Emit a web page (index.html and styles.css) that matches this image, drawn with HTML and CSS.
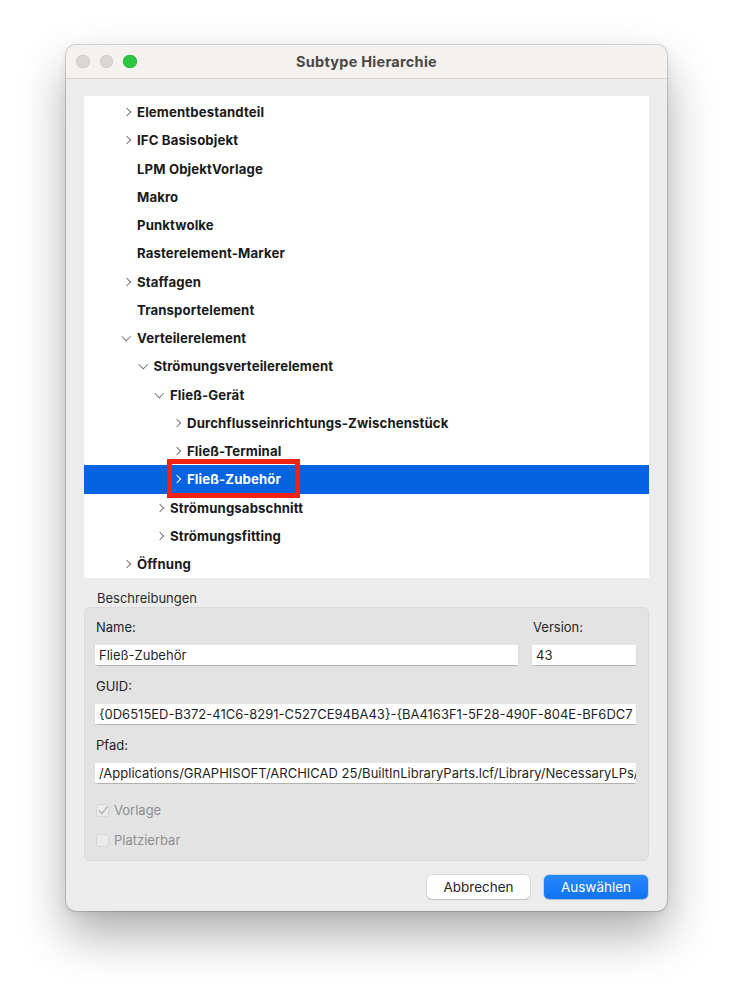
FILE: index.html
```html
<!DOCTYPE html>
<html lang="de">
<head>
    <meta charset="UTF-8">
    <title>Subtype Hierarchie</title>
    <link rel="stylesheet" href="styles.css">
</head>
<body>
    <div class="window">
        <div class="titlebar">
            <div class="lights">
                <span class="light"></span>
                <span class="light"></span>
                <span class="light green"></span>
            </div>
            <div class="title">Subtype Hierarchie</div>
            <div class="lights-spacer"></div>
        </div>

        <div class="dialog">
            <div class="tree">
                <div class="row lvl0"><span class="chev right"></span><span class="label">Elementbestandteil</span></div>
                <div class="row lvl0"><span class="chev right"></span><span class="label">IFC Basisobjekt</span></div>
                <div class="row lvl0"><span class="chev"></span><span class="label">LPM ObjektVorlage</span></div>
                <div class="row lvl0"><span class="chev"></span><span class="label">Makro</span></div>
                <div class="row lvl0"><span class="chev"></span><span class="label">Punktwolke</span></div>
                <div class="row lvl0"><span class="chev"></span><span class="label">Rasterelement-Marker</span></div>
                <div class="row lvl0"><span class="chev right"></span><span class="label">Staffagen</span></div>
                <div class="row lvl0"><span class="chev"></span><span class="label">Transportelement</span></div>
                <div class="row lvl0"><span class="chev down"></span><span class="label">Verteilerelement</span></div>
                <div class="row lvl1"><span class="chev down"></span><span class="label">Strömungsverteilerelement</span></div>
                <div class="row lvl2"><span class="chev down"></span><span class="label">Fließ-Gerät</span></div>
                <div class="row lvl3"><span class="chev right"></span><span class="label">Durchflusseinrichtungs-Zwischenstück</span></div>
                <div class="row lvl3"><span class="chev right"></span><span class="label">Fließ-Terminal</span></div>
                <div class="row lvl3 selected">
                    <span class="chev right"></span><span class="label">Fließ-Zubehör</span>
                    <span class="highlight-box"></span>
                </div>
                <div class="row lvl2"><span class="chev right"></span><span class="label">Strömungsabschnitt</span></div>
                <div class="row lvl2"><span class="chev right"></span><span class="label">Strömungsfitting</span></div>
                <div class="row lvl0"><span class="chev right"></span><span class="label">Öffnung</span></div>
            </div>

            <div class="group-title">Beschreibungen</div>
            <div class="group">
                <div class="field-row">
                    <div class="field field-name">
                        <div class="field-label">Name:</div>
                        <div class="input">Fließ-Zubehör</div>
                    </div>
                    <div class="field field-version">
                        <div class="field-label">Version:</div>
                        <div class="input">43</div>
                    </div>
                </div>
                <div class="field field-spaced">
                    <div class="field-label">GUID:</div>
                    <div class="input">{0D6515ED-B372-41C6-8291-C527CE94BA43}-{BA4163F1-5F28-490F-804E-BF6DC7</div>
                </div>
                <div class="field field-spaced">
                    <div class="field-label">Pfad:</div>
                    <div class="input">/Applications/GRAPHISOFT/ARCHICAD 25/BuiltInLibraryParts.lcf/Library/NecessaryLPs/</div>
                </div>
                <div class="check first">
                    <span class="box checked">
                        <svg width="10" height="9" viewBox="0 0 10 9"><polyline points="1,4.8 3.8,7.6 9,1.2" fill="none" stroke="#b9b9b9" stroke-width="1.6" stroke-linecap="round" stroke-linejoin="round"/></svg>
                    </span>
                    <span>Vorlage</span>
                </div>
                <div class="check">
                    <span class="box"></span>
                    <span>Platzierbar</span>
                </div>
            </div>

            <div class="buttons">
                <button class="btn">Abbrechen</button>
                <button class="btn primary">Auswählen</button>
            </div>
        </div>
    </div>
</body>
</html>
```

FILE: styles.css
```css
html, body {
    margin: 0;
    padding: 0;
    background-color: #ffffff;
}

body {
    font-family: 'Inter', 'Noto Sans', sans-serif;
    font-size: 13px;
    color: #1d1d1f;
    width: 733px;
    height: 999px;
    overflow: hidden;
}

.window {
    margin: 45px 0 0 66px;
    width: 601px;
    height: 866px;
    border-radius: 10px;
    overflow: hidden;
    background-color: #ececec;
    box-shadow: 0 0 0 1px rgba(0, 0, 0, 0.14), 0 24px 48px rgba(0, 0, 0, 0.32), 0 2px 8px rgba(0, 0, 0, 0.08);
}

/* title bar */
.titlebar {
    display: flex;
    align-items: center;
    height: 33px;
    background-color: #f4f1ee;
    border-bottom: 1px solid #d6d3d0;
}

.lights {
    display: flex;
    gap: 10px;
    width: 80px;
    padding-left: 10px;
    box-sizing: border-box;
    flex: none;
}

.lights-spacer {
    width: 80px;
    flex: none;
}

.light {
    width: 13.5px;
    height: 13.5px;
    flex: none;
    border-radius: 50%;
    background-color: #d9d6d3;
    box-shadow: inset 0 0 0 0.5px #c8c5c2;
}

.light.green {
    background-color: #2ac840;
    box-shadow: inset 0 0 0 0.5px #22ad36;
}

.title {
    flex: 1;
    text-align: center;
    font-weight: 700;
    font-size: 14.5px;
    letter-spacing: 0.25px;
    color: #4a4846;
}

/* dialog body */
.dialog {
    padding: 17px 18px 12px 18px;
}

.tree {
    height: 482px;
    background-color: #ffffff;
    padding-top: 2px;
    box-sizing: border-box;
}

.row {
    position: relative;
    display: flex;
    align-items: center;
    height: 28.25px;
    font-weight: 700;
    font-size: 13.2px;
    letter-spacing: 0.12px;
    color: #1a1a1a;
}

.lvl0 { padding-left: 38px; }
.lvl1 { padding-left: 54.5px; }
.lvl2 { padding-left: 71px; }
.lvl3 { padding-left: 88px; }

.chev {
    width: 15px;
    height: 10px;
    flex: none;
    position: relative;
}

.chev.right::before {
    content: "";
    position: absolute;
    left: 2px;
    top: 2px;
    width: 5px;
    height: 5px;
    border-right: 1.5px solid #767676;
    border-top: 1.5px solid #767676;
    transform: rotate(45deg);
}

.chev.down::before {
    content: "";
    position: absolute;
    left: 1px;
    top: 0px;
    width: 5.5px;
    height: 5.5px;
    border-right: 1.5px solid #767676;
    border-bottom: 1.5px solid #767676;
    transform: rotate(45deg);
}

.row.selected {
    background-color: #0463e1;
    color: #ffffff;
}

.row.selected .chev.right::before {
    border-color: #ffffff;
}

.highlight-box {
    position: absolute;
    left: 83px;
    top: -6px;
    width: 133px;
    height: 39px;
    border: 5px solid #f2220f;
    box-sizing: border-box;
}

/* description group */
.group-title {
    margin-top: 12px;
    padding-left: 13px;
    line-height: 16px;
    color: #2a2a2a;
}

.group {
    margin-top: 1px;
    height: 254px;
    box-sizing: border-box;
    background-color: #e3e3e3;
    border: 1px solid #dadada;
    border-radius: 6px;
    padding: 11px 12px 12px 10px;
}

.field-row {
    display: flex;
    gap: 14px;
}

.field-name {
    width: 423px;
}

.field-version {
    width: 104px;
}

.field-label {
    line-height: 16px;
    color: #262626;
    padding-left: 1px;
    margin-bottom: 10px;
}

.field-spaced {
    margin-top: 13px;
}

.input {
    height: 20px;
    line-height: 20px;
    background-color: #ffffff;
    padding-left: 4px;
    white-space: nowrap;
    overflow: hidden;
    color: #1f1f1f;
    box-shadow: 0 0.5px 1px rgba(0, 0, 0, 0.22);
}

.check {
    display: flex;
    align-items: center;
    gap: 5px;
    line-height: 16px;
    color: #8e8e8e;
    margin-top: 14px;
    padding-left: 1px;
}

.check.first {
    margin-top: 19px;
}

.box {
    width: 13px;
    height: 13px;
    border-radius: 3px;
    background-color: #ebebeb;
    box-shadow: inset 0 0 0 1px #d6d6d6;
    display: flex;
    align-items: center;
    justify-content: center;
}

/* buttons */
.buttons {
    display: flex;
    justify-content: flex-end;
    gap: 14px;
    margin-top: 14px;
    padding-right: 1px;
}

.btn {
    width: 103px;
    height: 24px;
    border: none;
    border-radius: 5px;
    font-family: 'Inter', 'Noto Sans', sans-serif;
    font-size: 13.5px;
    color: #262626;
    background-color: #ffffff;
    box-shadow: 0 0 0 0.5px rgba(0, 0, 0, 0.15), 0 1px 1px rgba(0, 0, 0, 0.12);
}

.btn.primary {
    width: 104px;
    color: #ffffff;
    background: linear-gradient(#2889fb, #0f74f2);
    box-shadow: 0 0 0 0.5px rgba(0, 80, 200, 0.3), 0 1px 1px rgba(0, 0, 0, 0.12);
}
```
